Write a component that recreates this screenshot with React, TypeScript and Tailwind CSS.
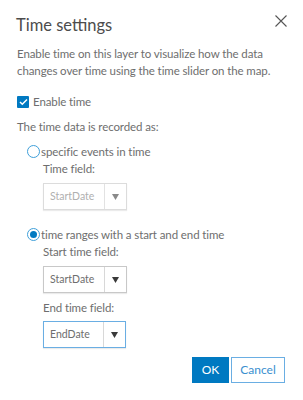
import React from "react";

function Select({ value, disabled, focused, w }: { value: string; disabled?: boolean; focused?: boolean; w: string }) {
  const border = focused ? "border-[#6aaee3]" : disabled ? "border-[#dcdcdc]" : "border-[#c8c8c8]";
  return (
    <div className={`flex h-[27px] ${w} items-stretch border ${border} bg-white shadow-[0_1px_1px_rgba(0,0,0,0.08)]`}>
      <div className={`flex flex-1 items-center pl-[6px] text-[10.5px] ${disabled ? "text-[#b0b0b0]" : "text-[#6e6e6e]"}`}>{value}</div>
      <div className={`flex w-[22px] items-center justify-center border-l ${disabled ? "border-[#e2e2e2]" : "border-[#d8d8d8]"}`}>
        <svg width="7" height="6" viewBox="0 0 7 6"><path d="M0 0h7L3.5 6z" fill={disabled ? "#8a8a8a" : "#3a3a3a"} /></svg>
      </div>
    </div>
  );
}

const T = "text-[11.5px] leading-[17px] tracking-[-0.1px] text-[#6e6e6e]";

export default function App() {
  return (
    <div className="h-[400px] w-[303px] bg-white" style={{ fontFamily: "Lato, 'Open Sans', sans-serif" }}>
      <div className="flex items-start justify-between pl-[16px] pr-[16px] pt-[14px]">
        <div className="text-[16.5px] leading-[22px] text-[#4c4c4c]">Time settings</div>
        <svg width="12" height="12" viewBox="0 0 12 12" className="mt-[1px]">
          <path d="M0.5 0.5l11 11M11.5 0.5l-11 11" stroke="#555" strokeWidth="1.1" />
        </svg>
      </div>
      <div className={`mt-[9px] pl-[17px] pr-[10px] ${T}`}>
        Enable time on this layer to visualize how the data changes over time using the time slider on the map.
      </div>
      <div className="mt-[14px] flex items-center pl-[17px]">
        <div className="flex h-[12px] w-[12px] items-center justify-center rounded-[1px] bg-[#0079c1]">
          <svg width="9" height="8" viewBox="0 0 9 8"><path d="M1 4l2.3 2.3L8 1.5" stroke="white" strokeWidth="1.5" fill="none" /></svg>
        </div>
        <span className={`ml-[4px] ${T}`}>Enable time</span>
      </div>
      <div className={`mt-[8px] pl-[17px] ${T}`}>The time data is recorded as:</div>
      <div className="mt-[8px] pl-[27px]">
        <div className="flex items-center">
          <div className="h-[13px] w-[13px] rounded-full border-[1.5px] border-[#3f9fd9] bg-white" />
          <span className={`ml-[1px] ${T}`}>specific events in time</span>
        </div>
        <div className="pl-[16px]">
          <div className={T}>Time field:</div>
          <div className="mt-[6px]"><Select value="StartDate" disabled w="w-[84px]" /></div>
        </div>
        <div className="mt-[16px] flex items-center">
          <div className="flex h-[13px] w-[13px] items-center justify-center rounded-full border-[1.5px] border-[#3f9fd9] bg-white">
            <div className="h-[7px] w-[7px] rounded-full bg-[#0079c1]" />
          </div>
          <span className={`ml-[1px] ${T}`}>time ranges with a start and end time</span>
        </div>
        <div className="pl-[16px]">
          <div className={T}>Start time field:</div>
          <div className="mt-[6px]"><Select value="StartDate" w="w-[84px]" /></div>
          <div className={`mt-[6px] ${T}`}>End time field:</div>
          <div className="mt-[5px]"><Select value="EndDate" focused w="w-[83px]" /></div>
        </div>
      </div>
      <div className="mt-[9px] flex justify-end gap-[2px] pr-[18px]">
        <button className="h-[26px] w-[37px] bg-[#0079c1] text-[12px] text-white">OK</button>
        <button className="h-[26px] w-[54px] border border-[#6aaee3] bg-white text-[12px] text-[#3a8fcf]">Cancel</button>
      </div>
    </div>
  );
}
